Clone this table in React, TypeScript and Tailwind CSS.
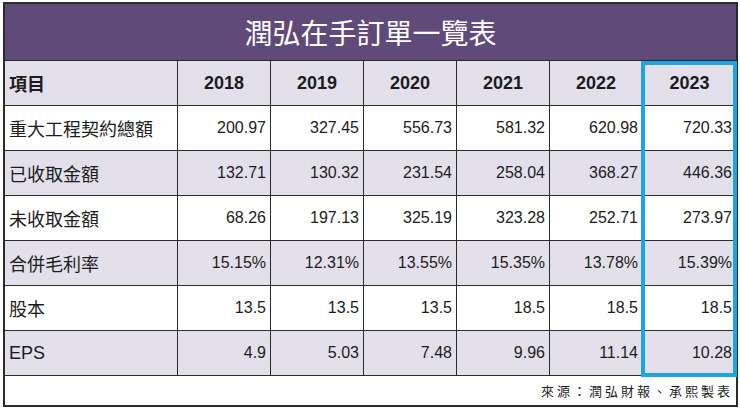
const years = ['2018', '2019', '2020', '2021', '2022', '2023'];

const rows = [
	{ label: '重大工程契約總額', values: ['200.97', '327.45', '556.73', '581.32', '620.98', '720.33'] },
	{ label: '已收取金額', values: ['132.71', '130.32', '231.54', '258.04', '368.27', '446.36'] },
	{ label: '未收取金額', values: ['68.26', '197.13', '325.19', '323.28', '252.71', '273.97'] },
	{ label: '合併毛利率', values: ['15.15%', '12.31%', '13.55%', '15.35%', '13.78%', '15.39%'] },
	{ label: '股本', values: ['13.5', '13.5', '13.5', '18.5', '18.5', '18.5'] },
	{ label: 'EPS', values: ['4.9', '5.03', '7.48', '9.96', '11.14', '10.28'] },
];

export default function App() {
	return (
		<div className="h-[410px] w-[740px] overflow-hidden bg-white pl-[3px] pt-[2px] text-[#1c1c1c]">
			<div className="relative w-[735px] border-2 border-[#2b2b2b]">
				<div className="flex h-[57px] items-center justify-center border-b border-[#2b2b2b] bg-[#5f4a79] font-['Noto_Sans_CJK_TC',sans-serif] text-[28px] text-white">
					潤弘在手訂單一覽表
				</div>

				<div className="grid h-[45px] grid-cols-[173px_repeat(6,1fr)] border-b border-[#2b2b2b] bg-[#e3e0ec]">
					<div className="flex items-center border-r border-[#2b2b2b] pl-[4px] font-['Noto_Sans_CJK_TC',sans-serif] text-[18px] font-bold">
						項目
					</div>
					{years.map((y, i) => (
						<div
							key={y}
							className={`flex items-center justify-center font-['Liberation_Sans',Arial,sans-serif] text-[18px] font-bold ${
								i < 5 ? 'border-r border-[#2b2b2b]' : ''
							}`}
						>
							{y}
						</div>
					))}
				</div>

				{rows.map((row, r) => (
					<div
						key={row.label}
						className={`grid h-[45px] grid-cols-[173px_repeat(6,1fr)] border-b border-[#2b2b2b] ${
							r % 2 === 1 ? 'bg-[#e3e0ec]' : 'bg-white'
						}`}
					>
						<div
							className={`flex items-center border-r border-[#2b2b2b] pl-[4px] text-[18px] ${
								row.label === 'EPS'
									? "font-['Liberation_Sans',Arial,sans-serif]"
									: "font-['Noto_Sans_CJK_TC',sans-serif]"
							}`}
						>
							{row.label}
						</div>
						{row.values.map((v, i) => (
							<div
								key={i}
								className={`flex items-center justify-end pr-[4px] font-['Liberation_Sans',Arial,sans-serif] text-[16px] ${
									i < 5 ? 'border-r border-[#2b2b2b]' : ''
								}`}
							>
								{v}
							</div>
						))}
					</div>
				))}

				<div className="flex h-[29px] items-center justify-end pr-[3px] font-['Noto_Sans_CJK_TC',sans-serif] text-[13px] tracking-[3px]">
					來源：潤弘財報、承熙製表
				</div>

				{/* highlight box round the 2023 column */}
				<div className="absolute bottom-[28px] right-[-1px] top-[57px] w-[96px] border-4 border-[#1ba6e1]"></div>
			</div>
		</div>
	);
}
